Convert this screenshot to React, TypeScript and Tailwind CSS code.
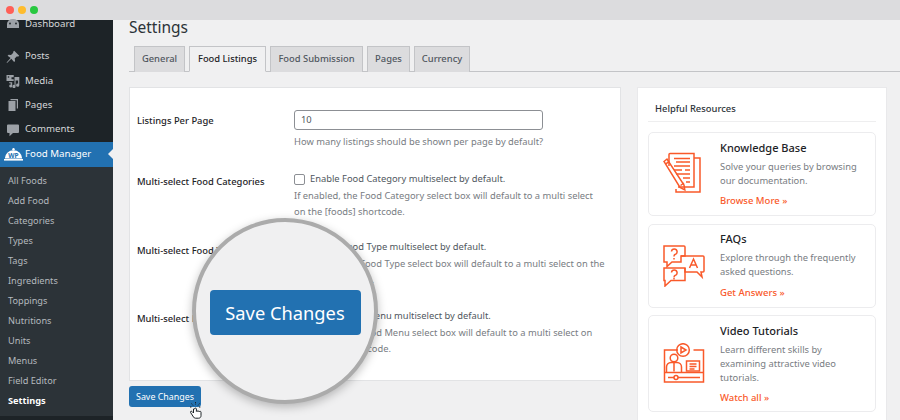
import type { ReactNode } from "react";

const font = { fontFamily: '"Noto Sans", "Open Sans", sans-serif' };

const submenu = ["All Foods", "Add Food", "Categories", "Types", "Tags", "Ingredients", "Toppings", "Nutritions", "Units", "Menus", "Field Editor"];

const tabs = [
  { label: "General", width: "w-[51px]" },
  { label: "Food Listings", width: "w-[77px]", active: true },
  { label: "Food Submission", width: "w-[93px]" },
  { label: "Pages", width: "w-[43px]" },
  { label: "Currency", width: "w-[56px]" },
];

function MenuItem({ icon, label }: { icon: ReactNode; label: string }) {
  return (
    <div className="flex h-[24.4px] items-center text-[9.7px] text-[#d5d7d9]">
      <span className="flex w-[25px] justify-center text-[#9ca1a7]">{icon}</span>
      {label}
    </div>
  );
}

function PinIcon() {
  return (
    <svg width="14" height="14" viewBox="0 0 14 14" fill="currentColor">
      <path d="M8.2 .8l5 5-1.2.9-1-.4-2.3 2.2.4 2.4-1 1L5.300 8.700 1 13l-.4-.4 4-4.600L1.600 5.700l1-1 2.400.4 2.300-2.300-.3-.9z" />
    </svg>
  );
}

function MediaIcon() {
  return (
    <svg width="14" height="14" viewBox="0 0 14 14" fill="currentColor">
      <path d="M.5 1h7.200v2.300H5.500v2H7.700v1.800H.5z" />
      <circle cx="2.500" cy="3" r=".8" fill="#1d2327" />
      <path d="M8.500 3h4.800v8.200a1.600 1.600 0 1 1-1.200-1.500V6.500H9.600v6a1.600 1.600 0 1 1-1.100-1.500z" />
      <path d="M2.800 8.200h3.400v3.800a1.500 1.500 0 1 1-1.100-1.400V9.500H3.900z" />
    </svg>
  );
}

function PagesIcon() {
  return (
    <svg width="14" height="14" viewBox="0 0 14 14" fill="currentColor">
      <path d="M4.500 1h7.500v9.500h-1.200V2.300H4.500z" />
      <path d="M2.500 3h7v10h-7z" />
    </svg>
  );
}

function CommentsIcon() {
  return (
    <svg width="14" height="14" viewBox="0 0 14 14" fill="currentColor">
      <path d="M2 1.500h10a1 1 0 0 1 1 1v6.500a1 1 0 0 1-1 1H7l-3.500 3.300V10H2a1 1 0 0 1-1-1V2.500a1 1 0 0 1 1-1z" />
    </svg>
  );
}

function DashboardIcon() {
  return (
    <svg width="14" height="14" viewBox="0 0 14 14" fill="currentColor">
      <path d="M1 11V7a6 5 0 0 1 12 0v4z" />
      <circle cx="4" cy="6.500" r=".9" fill="#1d2327" />
      <circle cx="10" cy="6.500" r=".9" fill="#1d2327" />
    </svg>
  );
}

function ClocheIcon() {
  return (
    <svg width="19" height="13" viewBox="0 0 19 13" className="mr-[2px] ml-[4px]">
      <circle cx="9.500" cy="1.300" r="1.200" fill="#fff" />
      <path d="M.8 10.500a8.700 8.300 0 0 1 17.400 0z" fill="#fff" />
      <path d="M0 11h19v1.600H0z" fill="#fff" />
      <text x="9.500" y="9.700" textAnchor="middle" fontSize="6.500" fontWeight="700" fontFamily="Noto Sans" fill="#2271b1">WP</text>
    </svg>
  );
}

function Sidebar() {
  return (
    <aside className="flex h-full w-[113px] shrink-0 flex-col bg-[#1d2327]">
      <div className="-mt-[8px] mb-[8px]">
        <MenuItem icon={<DashboardIcon />} label="Dashboard" />
      </div>
      <MenuItem icon={<PinIcon />} label="Posts" />
      <MenuItem icon={<MediaIcon />} label="Media" />
      <MenuItem icon={<PagesIcon />} label="Pages" />
      <MenuItem icon={<CommentsIcon />} label="Comments" />
      <div className="relative flex h-[25px] items-center bg-[#2271b1] text-[9.700px] text-white">
        <ClocheIcon />
        Food Manager
        <span className="absolute right-0 top-[7px] h-0 w-0 border-y-[5px] border-r-[5px] border-y-transparent border-r-[#f0f0f1]" />
      </div>
      <div className="bg-[#2c3338] pt-[3.500px] pb-[6px] pl-[8px] text-[9.200px] text-[#b4b9be]">
        {submenu.map((item) => (
          <div key={item} className="flex h-[20px] items-center">
            {item}
          </div>
        ))}
        <div className="flex h-[20px] items-center font-bold text-white">Settings</div>
      </div>
    </aside>
  );
}

function Tabs() {
  return (
    <div className="mt-[9px] flex h-[26px] gap-[4px] border-b border-[#c3c4c7] pl-[5px]">
      {tabs.map((tab) => (
        <div
          key={tab.label}
          className={`flex h-[26px] items-center justify-center border border-[#c3c4c7] text-[9.400px] font-medium ${tab.width} ${
            tab.active ? "border-b-[#f0f0f1] bg-[#f0f0f1] text-[#1d2327]" : "border-b-0 h-[25px] bg-[#dcdcde] text-[#50575e]"
          }`}
        >
          {tab.label}
        </div>
      ))}
    </div>
  );
}

function Field({
  label,
  labelOffset,
  height,
  children,
}: {
  label: string;
  labelOffset: string;
  height: string;
  children: ReactNode;
}) {
  return (
    <div className={`flex ${height}`}>
      <div className={`w-[157px] shrink-0 text-[9.400px] font-medium leading-[14px] text-[#1d2327] ${labelOffset}`}>{label}</div>
      <div className="min-w-0 flex-1">{children}</div>
    </div>
  );
}

function CheckField({ text, help, label, labelOffset, height }: { text: string; help: string; label: string; labelOffset: string; height: string }) {
  return (
    <Field label={label} labelOffset={labelOffset} height={height}>
      <div className="flex h-[14px] items-center text-[#50575e]">
        <span className="mr-[5px] h-[11px] w-[11px] rounded-[2px] border border-[#8c8f94] bg-white" />
        <span className="text-[9.350px]">{text}</span>
      </div>
      <p className="mt-[2px] w-[312px] text-[9.350px] leading-[15.500px] text-[#787c82]">{help}</p>
    </Field>
  );
}

function SettingsCard() {
  return (
    <div className="mt-[15px] h-[294px] w-[492px] border border-[#e2e3e5] bg-white pt-[22px] pl-[7px]">
      <Field label="Listings Per Page" labelOffset="pt-[4px]" height="h-[62px]">
        <div className="flex h-[20px] w-[249px] items-center rounded-[3px] border border-[#8c8f94] bg-white px-[6px] text-[9.350px] text-[#50575e]">10</div>
        <p className="mt-[4px] text-[9.350px] leading-[16px] text-[#787c82]">How many listings should be shown per page by default?</p>
      </Field>
      <CheckField
        label="Multi-select Food Categories"
        labelOffset="pt-[3px]"
        height="h-[68px]"
        text="Enable Food Category multiselect by default."
        help="If enabled, the Food Category select box will default to a multi select on the [foods] shortcode."
      />
      <CheckField
        label="Multi-select Food Types"
        labelOffset="pt-[4px]"
        height="h-[69px]"
        text="Enable Food Type multiselect by default."
        help="If enabled, the Food Type select box will default to a multi select on the [foods] shortcode."
      />
      <CheckField
        label="Multi-select Food Menu"
        labelOffset="pt-[3px]"
        height="h-[50px]"
        text="Enable Food Menu multiselect by default."
        help="If enabled, the Food Menu select box will default to a multi select on the [foods] shortcode."
      />
    </div>
  );
}

function KnowledgeIcon() {
  return (
    <svg width="42" height="44" viewBox="0 0 42 44" fill="none" stroke="#f9592a" strokeWidth="1.500">
      <path d="M31 6h6v34H13v-3" />
      <path d="M6 14V2.500a1 1 0 0 1 1-1h24v33.500H15" />
      <path d="M11 6.500h16M13 10h14M11 14h16M11 18h8M22 18h5M13 22h14M20 26h7M23 30h4" />
      <path d="M1 9.500l3-2.500 17 26 .8 5-4.800-2.500z" />
      <path d="M3 11.800l3-2.400M17.500 33.500l3.500-2.500" />
    </svg>
  );
}

function FaqIcon() {
  return (
    <svg width="42" height="42" viewBox="0 0 42 42" fill="none" stroke="#f9592a" strokeWidth="1.500">
      <path d="M1 1h20a1 1 0 0 1 1 1v9H18v6h-9l-5 4.500V17H1z" />
      <path d="M18 11h22a1 1 0 0 1 1 1v14a1 1 0 0 1-1 1h-2l1 5-5-5H22v-4" />
      <path d="M1 23h21v12.500H8L2 41v-5.500H1z" />
      <path d="M8.500 6.500a2.800 2.800 0 1 1 3.500 3c-.8.400-1 1-1 2M11 13v1.500M8.500 27.500a2.800 2.800 0 1 1 3.500 3c-.8.400-1 1-1 2M11 33v1.500" />
      <path d="M26.500 23l4-9 4 9M28 20h5" />
    </svg>
  );
}

function VideoIcon() {
  return (
    <svg width="42" height="42" viewBox="0 0 42 42" fill="none" stroke="#f9592a" strokeWidth="1.500">
      <path d="M15 7H1.500v32h39V7h-10" />
      <circle cx="20" cy="7" r="6.300" />
      <path d="M18 4l5 3-5 3z" />
      <path d="M1.500 29.500h39M5 34.500h32" />
      <circle cx="13" cy="34.500" r="2" fill="#fff" />
      <circle cx="11" cy="15" r="3.800" />
      <path d="M3.500 29v-5a4.500 4.500 0 0 1 4.500-4.500h6a4.500 4.500 0 0 1 4.500 4.500v5M11 19.500v9" />
      <path d="M23.500 18h13v10h-13zM26.500 21h7M26.500 23.500h7M26.500 26h5" />
      <path d="M4 10v.1M4 13v.1M4 16v.1" />
    </svg>
  );
}

function ResourceCard({
  icon,
  title,
  lines,
  link,
  height,
}: {
  icon: ReactNode;
  title: string;
  lines: string[];
  link: string;
  height: string;
}) {
  return (
    <div className={`flex items-center rounded-[5px] border border-[#ececee] bg-white ${height}`}>
      <div className="flex w-[71px] shrink-0 justify-center pr-[2px]">{icon}</div>
      <div className="self-start pt-[7.500px]">
        <h3 className="text-[11px] font-medium leading-[14px] text-[#1d2327]">{title}</h3>
        <div className="mt-[5px] text-[9.350px] leading-[14px] text-[#787c82]">
          {lines.map((line) => (
            <div key={line}>{line}</div>
          ))}
        </div>
        <div className="mt-[6.500px] text-[9.500px] font-medium leading-[14px] text-[#f9592a]">{link}</div>
      </div>
    </div>
  );
}

function ResourcesPanel() {
  return (
    <aside className="mt-[87px] h-[340px] w-[250px] shrink-0 border border-[#e9e9eb] bg-white px-[10px]">
      <div className="flex h-[34px] items-center border-b border-[#eeeeef] pl-[7px] pt-[15px] pb-[5px] text-[9.400px] font-medium text-[#2c3338]">
        Helpful Resources
      </div>
      <div className="mt-[10px] flex flex-col gap-[7.700px]">
        <ResourceCard icon={<KnowledgeIcon />} height="h-[84px]" title="Knowledge Base" lines={["Solve your queries by browsing", "our documentation."]} link="Browse More »" />
        <ResourceCard icon={<FaqIcon />} height="h-[84px]" title="FAQs" lines={["Explore through the frequently", "asked questions."]} link="Get Answers »" />
        <ResourceCard icon={<VideoIcon />} height="h-[97px]" title="Video Tutorials" lines={["Learn different skills by", "examining attractive video", "tutorials."]} link="Watch all »" />
      </div>
    </aside>
  );
}

function HandCursor() {
  return (
    <svg width="14" height="18" viewBox="0 0 14 18" className="absolute left-[60px] top-[15px]" fill="#fff" stroke="#1d2327" strokeWidth="1">
      <path d="M4.500 8V12L3 10.500c-1-.8-2 .2-1.300 1.200L4.500 16c.5.800 1 1.200 2 1.200h3c1.500 0 2.500-1 2.500-2.500v-3.500c0-1-1.300-1.200-1.500-.3 0-1-1.400-1.200-1.600-.3 0-1-1.400-1.100-1.500-.2V8c0-1.200-1.900-1.200-1.900 0z" />
      <path d="M6.500 1v2.500M2.500 2.500l1.500 2M10.500 2.500l-1.500 2M1 6h2M10 6h2" fill="none" strokeDasharray="1 .6" />
    </svg>
  );
}

function Magnifier() {
  return (
    <div className="absolute left-[192px] top-[198px] flex h-[186px] w-[186px] items-center justify-center rounded-full border-[4px] border-[#ababab] bg-[#f0f0f1] pt-[3px] shadow-[0_3px_10px_rgba(0,0,0,0.25)]">
      <div className="flex h-[45px] w-[151px] items-center justify-center rounded-[4px] bg-[#2271b1] text-[18.300px] text-white">Save Changes</div>
    </div>
  );
}

export default function App() {
  return (
    <div style={font} className="h-[420px] w-[900px] overflow-hidden bg-[#f0f0f1]">
      <header className="flex h-[20px] items-center gap-[4px] bg-[#dcdcde] pl-[6px]">
        <span className="h-[8px] w-[8px] rounded-full bg-[#ff5f57]" />
        <span className="h-[8px] w-[8px] rounded-full bg-[#febc2e]" />
        <span className="h-[8px] w-[8px] rounded-full bg-[#28c840]" />
      </header>
      <div className="relative flex h-[400px]">
        <Sidebar />
        <main className="w-[508px] shrink-0 pl-[16px]">
          <h1 className="-mt-[3px] h-[20px] text-[15.500px] leading-[20px] text-[#2c3338]">Settings</h1>
          <div className="w-[771px]">
            <Tabs />
          </div>
          <SettingsCard />
          <div className="relative mt-[5px] flex h-[21px] w-[72px] items-center justify-center rounded-[3px] bg-[#2271b1] text-[8.900px] text-white">
            Save Changes
            <HandCursor />
          </div>
        </main>
        <div className="-mt-[20px] ml-[16px]">
          <ResourcesPanel />
        </div>
        <Magnifier />
      </div>
    </div>
  );
}
